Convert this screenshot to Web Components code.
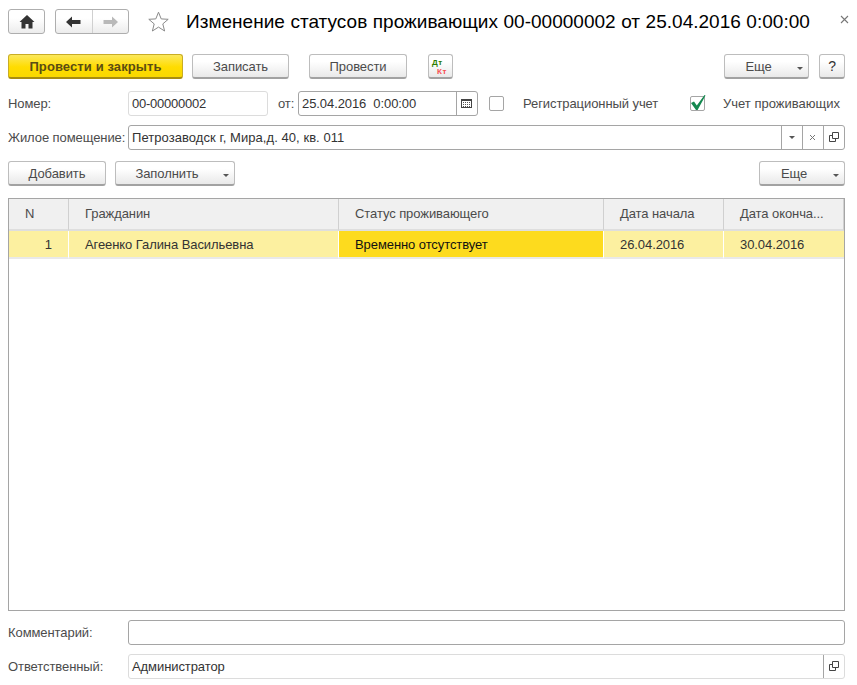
<!DOCTYPE html>
<html lang="ru"><head><meta charset="utf-8"><title>Изменение статусов проживающих</title>
<style>html,body{margin:0;background:#fff}body{font:13px "Liberation Sans",Arial,sans-serif;color:#4b4b4b;letter-spacing:-.08px}</style>
</head><body>
<doc-form></doc-form>
<template id="form-t">
<style>
:host{display:block;width:857px;height:685px;box-sizing:border-box;padding:9px 12px 0 8px;overflow:hidden;position:relative;background:#fff}
.row{display:flex;align-items:center;height:25px}
.nav{margin-bottom:20px}
.r1{margin-bottom:12px}.r2{margin-bottom:9px}.r3{margin-bottom:11px}.r4{margin-bottom:12px}
.r5{margin-top:9px}
.sp{flex:1}
h1{margin:0 0 0 17px;font:400 19px/25px "Liberation Sans",Arial,sans-serif;color:#000;white-space:nowrap;letter-spacing:.02px;word-spacing:.2px}
.close{position:absolute;left:839px;top:14px;width:12px;height:12px}
.star{margin-left:19px;width:21px;height:21px;flex:none}
.lbl{flex:none}
</style>
<div class="row nav">
  <nav-group style="width:37px"><svg width="16" height="14" viewBox="0 0 16 14"><path d="M8 0 L15.5 7 L13.5 7 L13.5 13.5 L9.5 13.5 L9.5 9 L6.5 9 L6.5 13.5 L2.5 13.5 L2.5 7 L.5 7Z" fill="#333"/></svg></nav-group>
  <nav-group style="width:74px;margin-left:10px" two><svg slot="a" width="15" height="12" viewBox="0 0 15 12"><path d="M0 6 L6 0.5 V4 H14.5 V8 H6 V11.5Z" fill="#333"/></svg><svg slot="b" width="15" height="12" viewBox="0 0 15 12"><path d="M15 6 L9 0.5 V4 H.5 V8 H9 V11.5Z" fill="#b9b9b9"/></svg></nav-group>
  <svg class="star" viewBox="0 0 21 21"><path d="M10.5 1.2 L13.2 7.9 L20.2 8.3 L14.8 12.9 L16.6 20 L10.5 16.1 L4.4 20 L6.2 12.9 L.8 8.3 L7.8 7.9Z" fill="#fff" stroke="#8a8a8a" stroke-width="1"/></svg>
  <h1>Изменение статусов проживающих 00-00000002 от 25.04.2016 0:00:00</h1>
</div>
<svg class="close" viewBox="0 0 12 12"><path d="M2 2 L9 9 M9 2 L2 9" stroke="#777" stroke-width="1.1" fill="none"/></svg>
<div class="row r1">
  <ui-button primary style="width:175px">Провести и закрыть</ui-button>
  <ui-button style="width:97px;margin-left:9px">Записать</ui-button>
  <ui-button style="width:98px;margin-left:20px">Провести</ui-button>
  <ui-button style="width:25px;margin-left:21px"><dt-kt></dt-kt></ui-button>
  <span class="sp"></span>
  <ui-button menu style="width:85px">Еще</ui-button>
  <ui-button style="width:26px;margin-left:10px"><span style="color:#333;font-size:14px">?</span></ui-button>
</div>
<div class="row r2">
  <span class="lbl" style="width:120px">Номер:</span>
  <ui-field style="width:140px;letter-spacing:-.25px" light>00-00000002</ui-field>
  <span class="lbl" style="margin-left:10px;width:20px">от:</span>
  <ui-field style="width:180px"><span style="white-space:pre">25.04.2016  0:00:00</span><svg slot="btn" data-w="20" width="11" height="9" viewBox="0 0 11 9"><rect x=".5" y=".5" width="10" height="8" fill="#fff" stroke="#444"/><rect x="0" y="0" width="11" height="2" fill="#444"/><path d="M2 3.5h1M4 3.5h1M6 3.5h1M8 3.5h1M2 5.5h1M4 5.5h1M6 5.5h1M8 5.5h1M2 7.5h1M4 7.5h1M6 7.5h1M8 7.5h1" stroke="#555" fill="none"/></svg></ui-field>
  <ui-check style="margin-left:11px;width:34px"></ui-check>
  <span class="lbl" style="width:135px;white-space:nowrap">Регистрационный учет</span>
  <ui-check checked style="margin-left:32px;width:33px"></ui-check>
  <span class="lbl" style="letter-spacing:0">Учет проживающих</span>
</div>
<div class="row r3">
  <span class="lbl" style="width:120px">Жилое помещение:</span>
  <ui-field style="width:717px;letter-spacing:.06px">Петрозаводск г, Мира,д. 40, кв. 011
    <svg slot="btn" data-w="20" width="6" height="3" viewBox="0 0 6 3"><path d="M0 0H6L3 3Z" fill="#555"/></svg>
    <svg slot="btn" data-w="20" width="7" height="7" viewBox="0 0 7 7"><path d="M1 1L6 6M6 1L1 6" stroke="#777" fill="none"/></svg>
    <svg slot="btn" data-w="20" width="10" height="10" viewBox="0 0 10 10"><path d="M3.5 .5H9.5V6.5H3.5ZM.5 3.5V9.5H6.5V7M.5 3.5H3" fill="none" stroke="#444"/></svg>
  </ui-field>
</div>
<div class="row r4">
  <ui-button style="width:98px">Добавить</ui-button>
  <ui-button menu style="width:120px;margin-left:9px">Заполнить</ui-button>
  <span class="sp"></span>
  <ui-button menu style="width:86px">Еще</ui-button>
</div>
<status-table></status-table>
<div class="row r5">
  <span class="lbl" style="width:120px">Комментарий:</span>
  <ui-field style="width:717px"></ui-field>
</div>
<div class="row r5">
  <span class="lbl" style="width:120px">Ответственный:</span>
  <ui-field style="width:717px" light>Администратор
    <svg slot="btn" data-w="20" width="10" height="10" viewBox="0 0 10 10"><path d="M3.5 .5H9.5V6.5H3.5ZM.5 3.5V9.5H6.5V7M.5 3.5H3" fill="none" stroke="#444"/></svg>
  </ui-field>
</div>
</template>
<script>
function reg(name, css, html, extra){
  customElements.define(name, class extends HTMLElement{
    constructor(){super();this.attachShadow({mode:'open'}).innerHTML='<style>'+css+'</style>'+html;}
    connectedCallback(){extra&&extra.call(this)}
  });
}
reg('nav-group',`
:host{display:flex;flex:none;height:25px;box-sizing:border-box;border:1px solid #aeaeae;border-radius:3px;background:linear-gradient(#fff,#fff 35%,#ececec)}
.c{flex:1;display:flex;align-items:center;justify-content:center}
.c+.c{border-left:1px solid #d0d0d0}
`,`<div class="c"><slot></slot><slot name="a"></slot></div>`,function(){
  if(this.hasAttribute('two')){const d=document.createElement('div');d.className='c';d.innerHTML='<slot name="b"></slot>';this.shadowRoot.appendChild(d);}
});
reg('ui-button',`
:host{display:flex;flex:none;box-sizing:border-box;height:25px;align-items:center;justify-content:center;position:relative;border:1px solid #bdbdbd;border-bottom:2px solid #a2a2a2;border-radius:3px;background:linear-gradient(#fff,#fff 30%,#e9e9e9);color:#4b4b4b;white-space:nowrap}
:host([primary]){background:linear-gradient(#fbe85c,#ffdc00 55%,#f9d800);border-color:#c9ad24 #c9ad24 #a78c11;font-weight:700;color:#5a4c14;letter-spacing:.1px}
:host([menu]){padding-right:16px}
:host([menu])::after{content:"";position:absolute;right:5px;top:12px;border-left:3px solid transparent;border-right:3px solid transparent;border-top:3px solid #555}
`,`<slot></slot>`);
reg('ui-field',`
:host{display:flex;flex:none;box-sizing:border-box;height:25px;border:1px solid #a5a5a5;border-radius:3px;background:#fff;color:#333;white-space:nowrap;overflow:hidden}
:host([light]){border-color:#dcdcdc}
.t{flex:1;padding-left:3px;line-height:23px;min-width:0}
.b{display:flex}
.b ::slotted(svg){flex:none;border-left:1px solid #a5a5a5}
`,`<div class="t"><slot></slot></div><div class="b"><slot name="btn"></slot></div>`,function(){
  this.querySelectorAll('svg[slot=btn]').forEach(s=>{const w=+s.dataset.w,iw=+s.getAttribute('width'),ih=+s.getAttribute('height');
    s.style.cssText=`width:${w}px;height:23px;display:block`;s.setAttribute('width',w);s.setAttribute('height',23);
    s.setAttribute('viewBox',`${-Math.floor((w-iw)/2)} ${-Math.floor((23-ih)/2)} ${w} 23`);});
});
reg('ui-check',`
:host{display:flex;flex:none;align-items:center;height:25px;position:relative}
.b{width:15px;height:15px;box-sizing:border-box;border:1px solid #a5a5a5;border-radius:2px;background:#fff}
svg{position:absolute;left:0;top:4px;display:none}
:host([checked]) svg{display:block}
`,`<div class="b"></div><svg width="16" height="16" viewBox="0 0 16 16"><path d="M1 8 L4 6.5 L6.8 10.5 L14.5 0 L15.5 .6 L7.6 15 L6 15Z" fill="#14884f"/></svg>`);
reg('dt-kt',`
:host{display:block;width:23px;height:18px;position:relative;font:700 8px "Liberation Sans",Arial,sans-serif;letter-spacing:.6px}
b{position:absolute;line-height:normal;white-space:nowrap}
.d{left:3px;top:1px;color:#2b7d00}.k{left:8px;top:10px;color:#f84f4f}
`,`<b class="d">Дт</b><b class="k">Кт</b>`);
reg('status-table',`
:host{display:block;box-sizing:border-box;height:413px;border:1px solid #a5a5a5;background:#fff;color:#4b4b4b}
.g{display:grid;grid-template-columns:60px 270px 265px 120px 1fr}
.h,.c{box-sizing:border-box;border-right:1px solid #fff;white-space:nowrap;overflow:hidden}
.h{height:32px;background:#f0f0f0;border-right-color:#d0d0d0;border-bottom:2px solid #dedede;padding-left:16px;line-height:30px}
.h:last-child,.c:last-child{border-right:0}
.c{height:28px;background:#fcf0a0;border-bottom:2px solid #e9e9e9;padding-left:16px;line-height:27px;color:#333}
.c.n{text-align:right;padding:0 16px 0 0}
.c.s{background:#fddb1e;color:#111}
`,`<div class="g">
<div class="h">N</div><div class="h">Гражданин</div><div class="h">Статус проживающего</div><div class="h">Дата начала</div><div class="h">Дата оконча...</div>
<div class="c n">1</div><div class="c">Агеенко Галина Васильевна</div><div class="c s">Временно отсутствует</div><div class="c">26.04.2016</div><div class="c">30.04.2016</div>
</div>`);
customElements.define('doc-form',class extends HTMLElement{
  constructor(){super();this.attachShadow({mode:'open'}).appendChild(document.getElementById('form-t').content.cloneNode(true));}
});
</script>
</body></html>
